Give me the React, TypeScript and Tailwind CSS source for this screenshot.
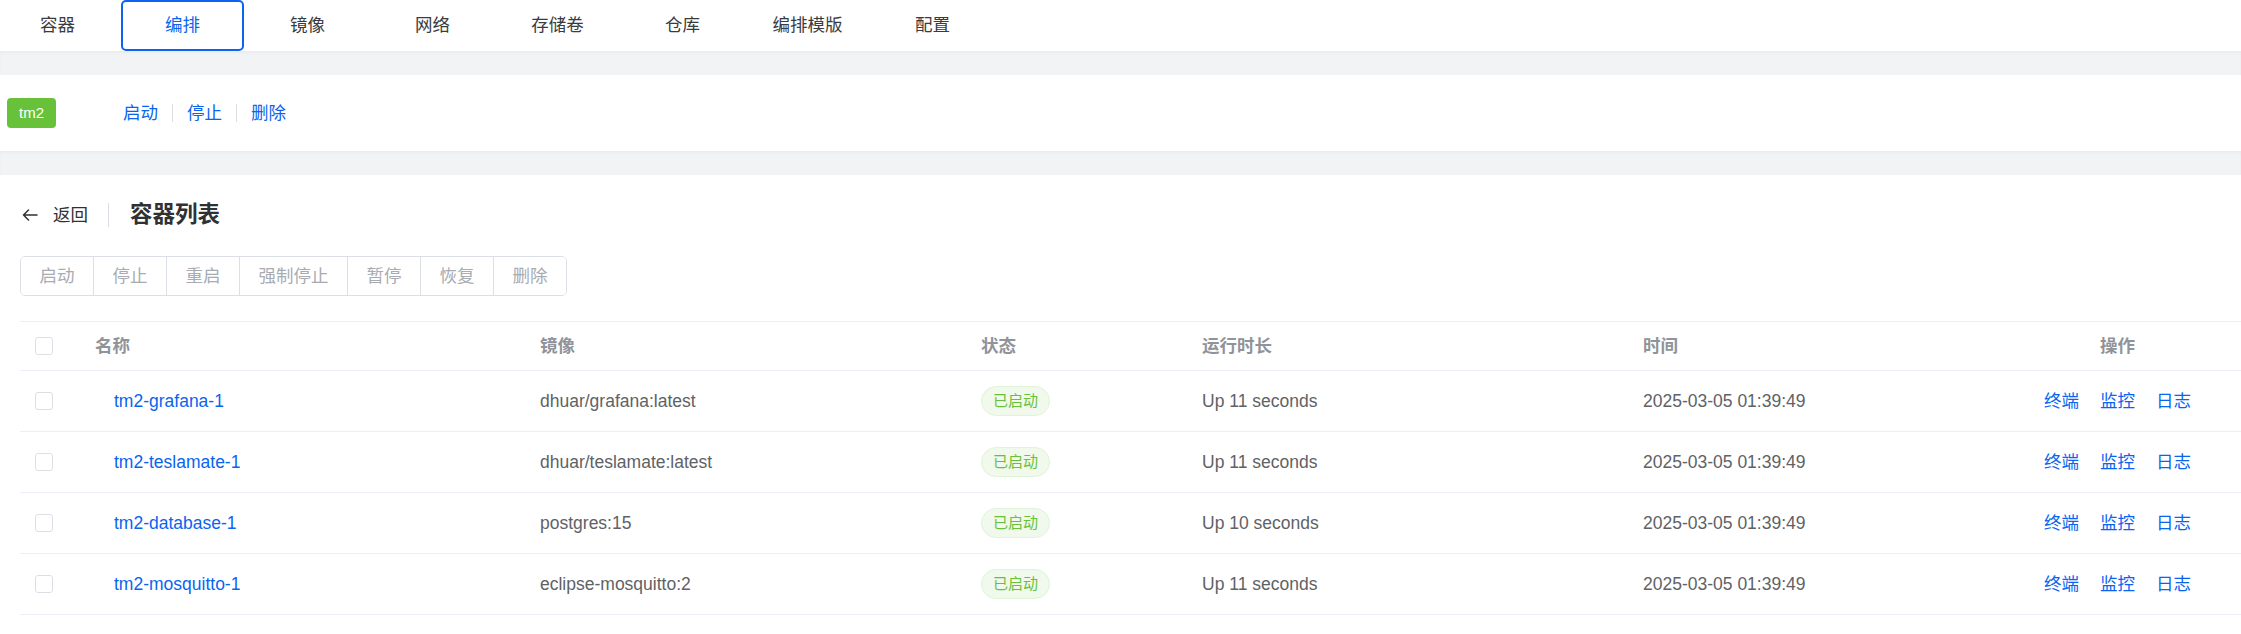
import React from 'react';

const tabs = ['容器', '编排', '镜像', '网络', '存储卷', '仓库', '编排模版', '配置'];
const actions = ['启动', '停止', '重启', '强制停止', '暂停', '恢复', '删除'];

const rows = [
  { name: 'tm2-grafana-1', image: 'dhuar/grafana:latest', up: 'Up 11 seconds' },
  { name: 'tm2-teslamate-1', image: 'dhuar/teslamate:latest', up: 'Up 11 seconds' },
  { name: 'tm2-database-1', image: 'postgres:15', up: 'Up 10 seconds' },
  { name: 'tm2-mosquitto-1', image: 'eclipse-mosquitto:2', up: 'Up 11 seconds' },
];

const cols = 'grid grid-cols-[60px_445px_441px_221px_441px_366px_1fr]';

const Checkbox = () => (
  <span className="block w-[18px] h-[18px] border border-[#dcdfe6] rounded-[3px] bg-white" />
);

export default function App() {
  return (
    <div className="w-[2241px] h-[634px] bg-white text-[17.5px] text-[#606266] font-['Liberation_Sans','Noto_Sans_CJK_SC',sans-serif] overflow-hidden">
      {/* top tabs */}
      <div className="h-[51px] flex items-stretch -ml-[4px] gap-[2px]">
        {tabs.map((t, i) => (
          <div
            key={t}
            className={
              i === 1
                ? 'w-[123px] flex items-center justify-center border-2 border-[#0a64f0] rounded-[5px] text-[#0a64f0]'
                : 'w-[123px] flex items-center justify-center text-[#3a3b3e]'
            }
          >
            {t}
          </div>
        ))}
      </div>
      <div className="h-[24px] bg-[#f2f3f5] shadow-[inset_0_2px_3px_rgba(0,0,0,0.03)]" />

      {/* compose panel */}
      <div className="h-[76px] flex items-center pl-[7px]">
        <span className="w-[49px] h-[30px] rounded-[4px] bg-[#67c23a] text-white text-[15px] flex items-center justify-center">
          tm2
        </span>
        <div className="ml-[67px] flex items-center text-[#0a64f0]">
          <span>启动</span>
          <span className="mx-[14px] w-px h-[18px] bg-[#dcdfe6]" />
          <span>停止</span>
          <span className="mx-[14px] w-px h-[18px] bg-[#dcdfe6]" />
          <span>删除</span>
        </div>
      </div>
      <div className="h-[24px] bg-[#f2f3f5] shadow-[inset_0_2px_3px_rgba(0,0,0,0.03)]" />

      {/* container list */}
      <div className="pl-[20px]">
        <div className="mt-[25px] h-[30px] flex items-center">
          <svg className="ml-[2px] text-[#303133]" width="16" height="12" viewBox="0 0 16 12" fill="none" stroke="currentColor" strokeWidth="1.5" strokeLinecap="round" strokeLinejoin="round">
            <path d="M15 6H1.5M6.5 1L1.5 6l5 5" />
          </svg>
          <span className="ml-[15px] text-[#303133]">返回</span>
          <span className="ml-[20px] w-px h-[24px] bg-[#dcdfe6]" />
          <span className="ml-[21px] text-[22.5px] font-bold text-[#303133]">容器列表</span>
        </div>

        <div className="mt-[26px] inline-flex h-[40px] border border-[#dcdfe6] rounded-[5px] overflow-hidden">
          {actions.map((a, i) => (
            <span
              key={a}
              className={
                i === 0
                  ? 'px-[18.5px] flex items-center text-[#a8abb2] bg-white'
                  : 'px-[18.5px] flex items-center text-[#a8abb2] bg-white border-l border-[#dcdfe6]'
              }
            >
              {a}
            </span>
          ))}
        </div>

        <div className="mt-[25px] border-t border-[#ebeef5]">
          <div className={`${cols} h-[49px] items-center border-b border-[#ebeef5] font-bold text-[#909399]`}>
            <div className="pl-[15px]">
              <Checkbox />
            </div>
            <div className="pl-[15px]">名称</div>
            <div className="pl-[15px]">镜像</div>
            <div className="pl-[15px]">状态</div>
            <div className="pl-[15px]">运行时长</div>
            <div className="pl-[15px]">时间</div>
            <div className="text-center">操作</div>
          </div>
          {rows.map((r) => (
            <div key={r.name} className={`${cols} h-[61px] items-center border-b border-[#ebeef5]`}>
              <div className="pl-[15px]">
                <Checkbox />
              </div>
              <div className="pl-[34px] text-[#0a64f0]">{r.name}</div>
              <div className="pl-[15px]">{r.image}</div>
              <div className="pl-[15px]">
                <span className="inline-flex items-center justify-center w-[69px] h-[30px] rounded-full bg-[#f0f9eb] border border-[#e1f3d8] text-[#67c23a] text-[15px]">
                  已启动
                </span>
              </div>
              <div className="pl-[15px]">{r.up}</div>
              <div className="pl-[15px]">2025-03-05 01:39:49</div>
              <div className="flex justify-center gap-[21px] text-[#0a64f0]">
                <span>终端</span>
                <span>监控</span>
                <span>日志</span>
              </div>
            </div>
          ))}
        </div>
      </div>
    </div>
  );
}
